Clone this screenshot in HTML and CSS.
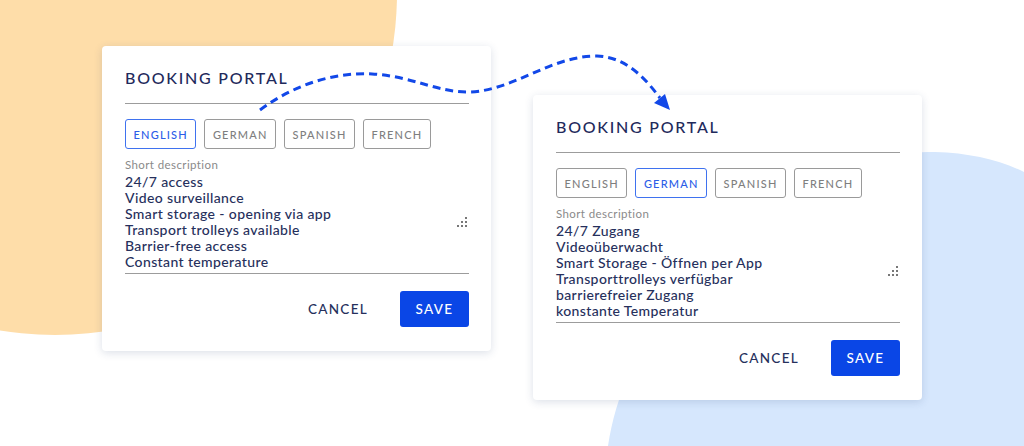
FILE: index.html
```html
<!DOCTYPE html>
<html lang="en">
<head>
<meta charset="utf-8">
<title>Booking Portal</title>
<link rel="stylesheet" href="styles.css">
</head>
<body>
<div class="stage">
  <svg class="bg" width="1024" height="446" viewBox="0 0 1024 446" aria-hidden="true">
    <circle cx="55" cy="-7" r="342" fill="#FEDDA9"/>
    <path d="M608 446 C 612 420, 618 400, 630 370 C 660 290, 720 210, 800 175 C 850 155, 900 152, 935 152 C 970 153, 1000 160, 1024 172 L 1024 446 Z" fill="#D6E7FD"/>
  </svg>

  <section class="card card-en">
    <h1 class="title">BOOKING PORTAL</h1>
    <div class="tabs">
      <button class="tab active">ENGLISH</button>
      <button class="tab">GERMAN</button>
      <button class="tab">SPANISH</button>
      <button class="tab">FRENCH</button>
    </div>
    <div class="field">
      <div class="label">Short description</div>
      <div class="area">
        <div class="text">24/7 access<br>Video surveillance<br>Smart storage - opening via app<br>Transport trolleys available<br>Barrier-free access<br>Constant temperature</div>
        <svg class="grip" width="11" height="11" viewBox="0 0 11 11" aria-hidden="true">
          <rect x="8" y="0" width="2" height="2" fill="#777"/>
          <rect x="4" y="4" width="2" height="2" fill="#777"/>
          <rect x="8" y="4" width="2" height="2" fill="#777"/>
          <rect x="0" y="8" width="2" height="2" fill="#777"/>
          <rect x="4" y="8" width="2" height="2" fill="#777"/>
          <rect x="8" y="8" width="2" height="2" fill="#777"/>
        </svg>
      </div>
    </div>
    <div class="actions">
      <button class="cancel">CANCEL</button>
      <button class="save">SAVE</button>
    </div>
  </section>

  <section class="card card-de">
    <h1 class="title">BOOKING PORTAL</h1>
    <div class="tabs">
      <button class="tab">ENGLISH</button>
      <button class="tab active">GERMAN</button>
      <button class="tab">SPANISH</button>
      <button class="tab">FRENCH</button>
    </div>
    <div class="field">
      <div class="label">Short description</div>
      <div class="area">
        <div class="text">24/7 Zugang<br>Videoüberwacht<br>Smart Storage - Öffnen per App<br>Transporttrolleys verfügbar<br>barrierefreier Zugang<br>konstante Temperatur</div>
        <svg class="grip" width="11" height="11" viewBox="0 0 11 11" aria-hidden="true">
          <rect x="8" y="0" width="2" height="2" fill="#777"/>
          <rect x="4" y="4" width="2" height="2" fill="#777"/>
          <rect x="8" y="4" width="2" height="2" fill="#777"/>
          <rect x="0" y="8" width="2" height="2" fill="#777"/>
          <rect x="4" y="8" width="2" height="2" fill="#777"/>
          <rect x="8" y="8" width="2" height="2" fill="#777"/>
        </svg>
      </div>
    </div>
    <div class="actions">
      <button class="cancel">CANCEL</button>
      <button class="save">SAVE</button>
    </div>
  </section>

  <svg class="arrow" width="1024" height="446" viewBox="0 0 1024 446" aria-hidden="true">
    <path d="M260 110 C 295 84, 335 72, 372 74 C 412 76, 438 93, 470 92 C 515 90, 550 56, 597 56 C 626 57, 645 78, 660 98" fill="none" stroke="#1248E8" stroke-width="3" stroke-dasharray="8 5" stroke-linecap="butt"/>
    <path d="M670 110 L 654 103 L 665 94 Z" fill="#1248E8"/>
  </svg>
</div>
</body>
</html>
```
FILE: styles.css
```css
* { box-sizing: border-box; }
html, body { margin: 0; padding: 0; background: #fff; }
body { font-family: "Lato", "Liberation Sans", sans-serif; }

.stage {
  position: relative;
  width: 1024px;
  height: 446px;
  overflow: hidden;
  background: #fff;
}
.bg, .arrow { position: absolute; left: 0; top: 0; }
.arrow { pointer-events: none; }

.card {
  position: absolute;
  width: 389px;
  height: 305px;
  background: #fff;
  border-radius: 4px;
  box-shadow: 0 2px 8px rgba(40, 60, 110, 0.16);
  padding: 22px 22px 24px 23px;
  display: flex;
  flex-direction: column;
}
.card-en { left: 102px; top: 46px; }
.card-de { left: 533px; top: 95px; }

.title {
  margin: 0;
  height: 20px;
  line-height: 20px;
  font-size: 16px;
  font-weight: 500;
  letter-spacing: 1.75px;
  color: #1f2a5c;
}
.tabs {
  margin-top: 15px;
  border-top: 1.5px solid #9c9c9c;
  padding-top: 15px;
  display: flex;
  gap: 8px;
}
.tab {
  height: 30px;
  padding: 0 7.5px;
  background: #fff;
  border: 1.2px solid #9a9a9a;
  border-radius: 3px;
  font-family: inherit;
  font-size: 11px;
  letter-spacing: 1.2px;
  color: #7f7f7f;
  font-weight: 500;
}
.tab.active {
  border-color: #3f72ef;
  color: #2c5de8;
}

.field { margin-top: 9px; }
.label {
  font-size: 11.5px;
  line-height: 14px;
  letter-spacing: 0.4px;
  color: #8a8a8a;
}
.area {
  display: flex;
  align-items: center;
  justify-content: space-between;
  margin-top: 2px;
  padding-bottom: 3px;
  border-bottom: 1.5px solid #9c9c9c;
}
.text {
  font-size: 14px;
  line-height: 16px;
  letter-spacing: 0.38px;
  color: #26305c;
  font-weight: 500;
}
.grip { margin-right: 1px; }

.actions {
  margin-top: 17px;
  display: flex;
  justify-content: flex-end;
  align-items: center;
  gap: 32px;
}
.cancel {
  background: none;
  border: 0;
  padding: 0;
  font-family: inherit;
  font-size: 13.5px;
  letter-spacing: 1.3px;
  color: #26305c;
  font-weight: 500;
}
.save {
  width: 69px;
  height: 36px;
  background: #0a46e6;
  border: 0;
  border-radius: 3px;
  color: #fff;
  font-family: inherit;
  font-size: 13.5px;
  letter-spacing: 1.3px;
  font-weight: 500;
}
```
